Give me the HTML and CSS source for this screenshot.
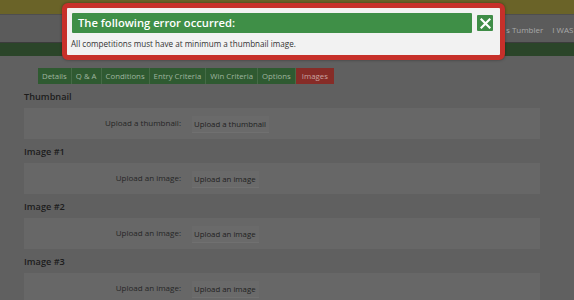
FILE: index.html
```html
<!DOCTYPE html>
<html lang="en">
<head>
    <meta charset="UTF-8">
    <title>Competition Images</title>
    <link rel="stylesheet" href="styles.css">
</head>
<body>
    <div class="topbar"></div>
    <div class="navbar">
        <span class="nav-link">s Tumbler</span>
        <span class="nav-link">I WAS THE</span>
    </div>
    <div class="greenbar"></div>

    <div class="content">
        <div class="tabs">
            <span class="tab">Details</span>
            <span class="tab">Q &amp; A</span>
            <span class="tab">Conditions</span>
            <span class="tab">Entry Criteria</span>
            <span class="tab">Win Criteria</span>
            <span class="tab">Options</span>
            <span class="tab tab--active">Images</span>
        </div>

        <h3 class="section-title">Thumbnail</h3>
        <div class="panel">
            <span class="field-label">Upload a thumbnail:</span>
            <span class="upload-btn">Upload a thumbnail</span>
        </div>

        <h3 class="section-title">Image #1</h3>
        <div class="panel">
            <span class="field-label">Upload an image:</span>
            <span class="upload-btn">Upload an image</span>
        </div>

        <h3 class="section-title">Image #2</h3>
        <div class="panel">
            <span class="field-label">Upload an image:</span>
            <span class="upload-btn">Upload an image</span>
        </div>

        <h3 class="section-title">Image #3</h3>
        <div class="panel">
            <span class="field-label">Upload an image:</span>
            <span class="upload-btn">Upload an image</span>
        </div>
    </div>

    <div class="modal">
        <div class="modal-head">
            <div class="modal-title">The following error occurred:</div>
            <span class="modal-close">
                <svg width="11" height="11" viewBox="0 0 11 11">
                    <path d="M1.5 1.5 L9.5 9.5 M9.5 1.5 L1.5 9.5" stroke="#fff" stroke-width="2.2" stroke-linecap="square"/>
                </svg>
            </span>
        </div>
        <p class="modal-msg">All competitions must have at minimum a thumbnail image.</p>
    </div>
</body>
</html>
```

FILE: styles.css
```css
body {
    margin: 0;
    background-color: #606060;
    font-family: "Open Sans", "DejaVu Sans", sans-serif;
    overflow: hidden;
    height: 300px;
}

.topbar {
    height: 14px;
    background-color: #6a6328;
    border-bottom: 1px solid #4e4e4e;
}

.navbar {
    height: 26px;
    background-color: #5b5b5b;
    display: flex;
    justify-content: flex-start;
    align-items: center;
    gap: 9px;
    padding: 1px 0 0 506px;
    font-size: 8px;
    color: #a9a9a9;
    white-space: nowrap;
    overflow: hidden;
    border-bottom: 1px solid #3c3c3c;
}

.greenbar {
    height: 13px;
    background-color: #2b4529;
}

.content {
    padding: 12px 34px 0 24px;
}

.tabs {
    display: flex;
    margin-left: 14px;
    height: 16px;
}

.tab {
    display: flex;
    align-items: center;
    padding: 0 4px;
    font-size: 7.8px;
    color: #9fb59f;
    background-color: #2f5a31;
    border-right: 1px solid #456b46;
    white-space: nowrap;
}

.tab--active {
    background-color: #862c27;
    color: #caa3a0;
    border-right: 0;
    padding: 0 6px;
}

.section-title {
    margin: 5px 0 0;
    height: 19px;
    font-size: 9.2px;
    font-weight: 600;
    color: #1c1c1c;
    line-height: 16px;
}

.panel {
    display: flex;
    align-items: center;
    height: 31px;
    background-color: #676767;
}

.field-label {
    width: 157px;
    text-align: right;
    font-size: 8px;
    color: #262626;
    margin-top: -2px;
}

.upload-btn {
    margin-left: 11px;
    padding: 3px 3px 3px 2px;
    font-size: 7.8px;
    color: #1f1f1f;
    background-color: #6a6a6a;
    border-bottom: 1px solid #707070;
    margin-top: 2px;
}

.modal {
    position: absolute;
    left: 62px;
    top: 3px;
    width: 433px;
    height: 47px;
    background-color: #f2f2f2;
    border: 5px solid #c7302a;
    border-radius: 6px;
    box-shadow: 0 0 3px rgba(0, 0, 0, 0.4);
}

.modal-head {
    display: flex;
    align-items: center;
    padding: 5px 7px 0 5px;
    gap: 5px;
}

.modal-title {
    flex: 1;
    height: 20px;
    line-height: 20px;
    padding-left: 6px;
    background-color: #3f8f47;
    color: #ffffff;
    font-size: 11.2px;
    font-weight: 600;
    border-radius: 1px;
}

.modal-close {
    width: 16px;
    height: 16px;
    display: flex;
    align-items: center;
    justify-content: center;
    background-color: #3f8d47;
    border-radius: 1px;
}

.modal-msg {
    margin: 5px 0 0 4px;
    font-size: 8.1px;
    color: #333333;
}
```
